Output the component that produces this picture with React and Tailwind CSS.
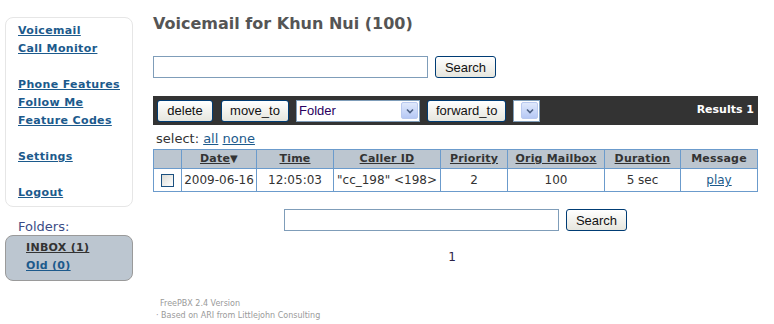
import { useState } from "react";

const sideLinks = [
  ["Voicemail", "Call Monitor"],
  ["Phone Features", "Follow Me", "Feature Codes"],
  ["Settings"],
  ["Logout"],
];

const columns = [
  { label: "Date", w: "w-[75px]", sort: true },
  { label: "Time", w: "w-[77px]" },
  { label: "Caller ID", w: "w-[107px]" },
  { label: "Priority", w: "w-[67px]" },
  { label: "Orig Mailbox", w: "w-[97px]" },
  { label: "Duration", w: "w-[76px]" },
  { label: "Message", w: "w-[77px]", plain: true },
];

const XpButton = ({ children, className = "" }) => (
  <button
    type="button"
    className={`h-[22px] rounded-[3px] border border-[#003c74] bg-gradient-to-b from-white to-[#e6e6de] px-2 text-[13px] leading-none text-[#111] font-['Liberation_Sans',Arial,sans-serif] ${className}`}
  >
    {children}
  </button>
);

const XpSelect = ({ label, className = "" }) => (
  <div className={`flex h-[22px] items-center border border-[#7f9db9] bg-white pl-[2px] pr-[1px] ${className}`}>
    <span className="flex-1 text-[13px] text-[#2a0060] font-['Liberation_Sans',Arial,sans-serif]">{label}</span>
    <span className="flex h-[17px] w-[17px] items-center justify-center rounded-[2px] border border-[#b9c9ef] bg-gradient-to-b from-[#e0e9fb] to-[#b6c8f5]">
      <svg width="8" height="6" viewBox="0 0 8 6">
        <path d="M1 1.5 L4 4.5 L7 1.5" stroke="#4d6185" strokeWidth="1.6" fill="none" />
      </svg>
    </span>
  </div>
);

const SearchRow = ({ className = "" }) => (
  <div className={`flex items-center gap-[7px] ${className}`}>
    <input type="text" className="h-[22px] w-[275px] border border-[#7f9db9] bg-white outline-none" />
    <XpButton className="w-[61px] px-0">Search</XpButton>
  </div>
);

export default function App() {
  const [checked, setChecked] = useState(false);

  return (
    <div className="flex min-h-[324px] w-[774px] bg-white text-[#333] font-['DejaVu_Sans',Verdana,sans-serif]">
      {/* Sidebar */}
      <div className="ml-[5px] mt-[17px] w-[128px] shrink-0">
        <div className="rounded-[8px] border border-[#e6e6e6] pl-[12px] pt-[4px] pb-[4px]">
          {sideLinks.map((group, gi) => (
            <div key={gi} className={gi > 0 ? "mt-[18px]" : ""}>
              {group.map((l) => (
                <a key={l} href="#" className="block h-[18px] text-[11px] font-bold leading-[18px] tracking-[0.35px] text-[#1c5a8c] underline">
                  {l}
                </a>
              ))}
            </div>
          ))}
        </div>
        <div className="mt-[12px] pl-[13px] text-[13px] leading-[16px] text-[#3b4c85]">Folders:</div>
        <div className="rounded-[8px] border border-[#9a9a9a] bg-[#bcc6d0] pl-[20px] pt-[3px] pb-[5px]">
          <a href="#" className="block h-[18px] text-[11px] font-bold leading-[18px] tracking-[0.3px] text-[#333] underline">INBOX (1)</a>
          <a href="#" className="block h-[18px] text-[11px] font-bold leading-[18px] tracking-[0.3px] text-[#1c5a8c] underline">Old (0)</a>
        </div>
      </div>

      {/* Main */}
      <div className="ml-[20px] flex w-[605px] flex-col">
        <h1 className="mt-[12px] h-[24px] text-[16px] font-bold leading-[24px] text-[#555]">
          Voicemail for Khun Nui (100)
        </h1>
        <SearchRow className="mt-[20px]" />

        <div className="mt-[18px] flex h-[29px] items-center bg-[#333] pl-[4px] pr-[4px]">
          <XpButton className="w-[56px]">delete</XpButton>
          <XpButton className="ml-[8px] w-[68px]">move_to</XpButton>
          <XpSelect label="Folder" className="ml-[7px] w-[124px]" />
          <XpButton className="ml-[7px] w-[79px]">forward_to</XpButton>
          <XpSelect label="" className="ml-[7px] w-[27px]" />
          <span className="ml-auto text-[11px] font-bold text-white">Results 1</span>
        </div>

        <div className="mt-[4px] h-[20px] pl-[3px] text-[13px] leading-[20px] text-[#333]">
          select:{" "}
          <a href="#" className="text-[#1c5a8c] underline">all</a>{" "}
          <a href="#" className="text-[#1c5a8c] underline">none</a>
        </div>

        <table className="border-collapse border border-[#6b9bcc] text-[11px]">
          <thead>
            <tr className="h-[19px] bg-[#bcc6d0]">
              <th className="w-[28px] border border-[#6b9bcc]"></th>
              {columns.map((c) => (
                <th key={c.label} className={`${c.w} border border-[#6b9bcc] font-bold tracking-[0.2px] text-[#333]`}>
                  {c.plain ? (
                    c.label
                  ) : (
                    <a href="#" className="underline">
                      {c.label}
                    </a>
                  )}
                  {c.sort && <span className="text-[10px]">▼</span>}
                </th>
              ))}
            </tr>
          </thead>
          <tbody>
            <tr className="h-[23px] text-center text-[12px] text-[#333]">
              <td className="border border-[#6b9bcc]">
                <span
                  onClick={() => setChecked(!checked)}
                  className="mx-auto mt-[1px] block h-[13px] w-[13px] border border-[#1c5180] bg-gradient-to-br from-[#dcdcd6] to-white"
                />
              </td>
              <td className="border border-[#6b9bcc]">2009-06-16</td>
              <td className="border border-[#6b9bcc]">12:05:03</td>
              <td className="border border-[#6b9bcc]">"cc_198" &lt;198&gt;</td>
              <td className="border border-[#6b9bcc]">2</td>
              <td className="border border-[#6b9bcc]">100</td>
              <td className="border border-[#6b9bcc]">5 sec</td>
              <td className="border border-[#6b9bcc]">
                <a href="#" className="text-[#1c5a8c] underline">play</a>
              </td>
            </tr>
          </tbody>
        </table>

        <SearchRow className="mt-[17px] justify-center" />

        <div className="mt-[17px] pr-[7px] text-center text-[12px] leading-[18px] text-[#2b2246]">1</div>

        <div className="mt-[32px] text-[8px] leading-[12px] text-[#9a9a9a]">
          <div className="pl-[7px]">FreePBX 2.4 Version</div>
          <div className="pl-[3px]">· Based on ARI from Littlejohn Consulting</div>
        </div>
      </div>
    </div>
  );
}
